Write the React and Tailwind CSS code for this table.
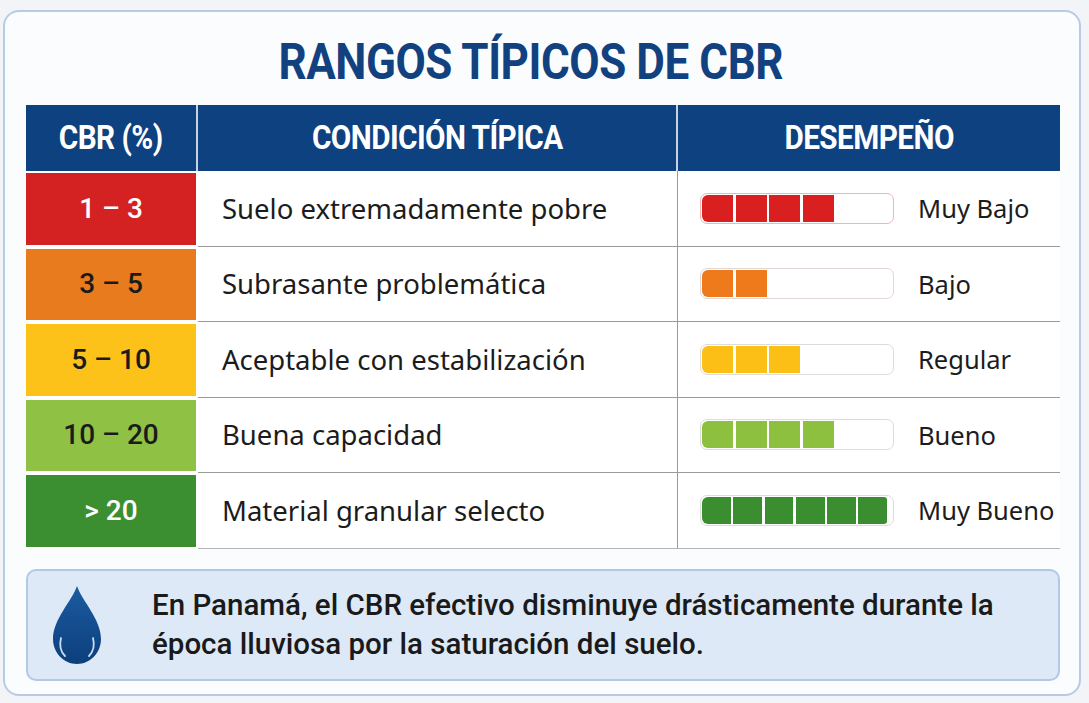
const rows = [
  { range: '1 – 3', bg: 'bg-[#d42222]', fg: 'text-white', cond: 'Suelo extremadamente pobre', seg: 4, segColor: 'bg-[#d91f1f]', border: 'border-[#f0b5b5]', label: 'Muy Bajo' },
  { range: '3 – 5', bg: 'bg-[#e97b1f]', fg: 'text-[#1b1b1b]', cond: 'Subrasante problemática', seg: 2, segColor: 'bg-[#ee7a1c]', border: 'border-[#e3d6d6]', label: 'Bajo' },
  { range: '5 – 10', bg: 'bg-[#fcc21a]', fg: 'text-[#1b1b1b]', cond: 'Aceptable con estabilización', seg: 3, segColor: 'bg-[#fcbf16]', border: 'border-[#dcdcdc]', label: 'Regular' },
  { range: '10 – 20', bg: 'bg-[#8fc244]', fg: 'text-[#1b1b1b]', cond: 'Buena capacidad', seg: 4, segColor: 'bg-[#8cc03e]', border: 'border-[#dcdcdc]', label: 'Bueno' },
  { range: '> 20', bg: 'bg-[#3b8f30]', fg: 'text-white', cond: 'Material granular selecto', seg: 6, segColor: 'bg-[#3a8e2f]', border: 'border-[#dcdcdc]', label: 'Muy Bueno' },
];

function Bar({ seg, color, border }) {
  const full = seg === 6;
  return (
    <div className={`w-[194px] h-[31px] rounded-[7px] border bg-white ${border} py-[1px] pl-[1px] ${full ? 'pr-[6px]' : 'pr-[1px]'} flex gap-[2.5px] overflow-hidden`}>
      {Array.from({ length: seg }).map((_, i) => (
        <div
          key={i}
          className={`h-full ${full ? 'flex-1' : 'w-[31px]'} ${color} ${i === 0 ? 'rounded-l-[6px]' : ''} ${i === 5 ? 'rounded-r-[3px]' : ''}`}
        />
      ))}
    </div>
  );
}

function Drop() {
  return (
    <svg width="50" height="80" viewBox="0 0 50 80">
      <defs>
        <linearGradient id="dg" x1="0" y1="0" x2="0" y2="1">
          <stop offset="0" stopColor="#1c5ba1" />
          <stop offset="1" stopColor="#0c3f7c" />
        </linearGradient>
      </defs>
      <path d="M25 1 C20 16 1 34 1 54 C1 68 12 79 25 79 C38 79 49 68 49 54 C49 34 30 16 25 1 Z" fill="url(#dg)" />
      <path d="M9 53 C7 61 9 67 13 71" stroke="#c9dcf0" strokeWidth="1.8" fill="none" strokeLinecap="round" />
      <path d="M41 53 C43 61 41 67 37 71" stroke="#c9dcf0" strokeWidth="1.8" fill="none" strokeLinecap="round" />
    </svg>
  );
}

export default function App() {
  return (
    <div className="w-[1089px] h-[703px] bg-[#f2f4f7] pt-[10px] pl-[3px] font-['Roboto',sans-serif]">
      <div className="w-[1078px] h-[686px] rounded-[16px] border-2 border-[#b9cbe3] bg-[#fbfcfd] px-[21px] pt-[22px]">
        <div className="flex justify-center h-[56px] items-center pr-[22px]">
          <h1 className="text-[50px] leading-[56px] font-bold text-[#12417f] tracking-[-0.5px] scale-x-[0.88] whitespace-nowrap">
            RANGOS TÍPICOS DE CBR
          </h1>
        </div>
        <div className="mt-[15px] w-[1034px]">
          <div className="flex h-[66px] bg-[#0e4180] text-white text-[33px] font-bold tracking-[-0.6px]">
            <div className="w-[172px] flex items-center justify-center border-r-2 border-[#c7d3e2]">
              <span className="scale-x-[0.9] whitespace-nowrap">CBR (%)</span>
            </div>
            <div className="w-[480px] flex items-center justify-center border-r-2 border-[#c7d3e2]">
              <span className="scale-x-[0.9] whitespace-nowrap">CONDICIÓN TÍPICA</span>
            </div>
            <div className="flex-1 flex items-center justify-center">
              <span className="scale-x-[0.9] whitespace-nowrap">DESEMPEÑO</span>
            </div>
          </div>
          {rows.map((r, i) => (
            <div key={i} className="flex h-[75.5px] bg-white">
              <div className={`w-[172px] shrink-0 flex items-center justify-center ${r.bg} ${r.fg} text-[28px] font-medium border-y-[2px] border-r-[2px] border-white`}>
                {r.range}
              </div>
              <div className={`w-[480px] shrink-0 flex items-center pl-[24px] text-[27.5px] text-[#1c1c1c] font-['Noto_Sans',sans-serif] border-r border-[#9a9a9a] border-b ${i < 4 ? 'border-b-[#9a9a9a]' : 'border-b-[#b5b5b5]'}`}>
                <span className="whitespace-nowrap">{r.cond}</span>
              </div>
              <div className={`flex-1 flex items-center pl-[22px] gap-[24px] border-b ${i < 4 ? 'border-[#9a9a9a]' : 'border-[#b5b5b5]'}`}>
                <Bar seg={r.seg} color={r.segColor} border={r.border} />
                <span className="text-[25.5px] text-[#1c1c1c] font-['Noto_Sans',sans-serif] whitespace-nowrap">{r.label}</span>
              </div>
            </div>
          ))}
          <div className="mt-[20px] h-[112px] rounded-[10px] border-2 border-[#b1c9e6] bg-[#dde9f6] flex items-center pl-[24px] gap-[50px]">
            <Drop />
            <p className="text-[29.5px] leading-[39px] font-medium text-[#1a1a1a] whitespace-nowrap">
              En Panamá, el CBR efectivo disminuye drásticamente durante la
              <br />
              época lluviosa por la saturación del suelo.
            </p>
          </div>
        </div>
      </div>
    </div>
  );
}
